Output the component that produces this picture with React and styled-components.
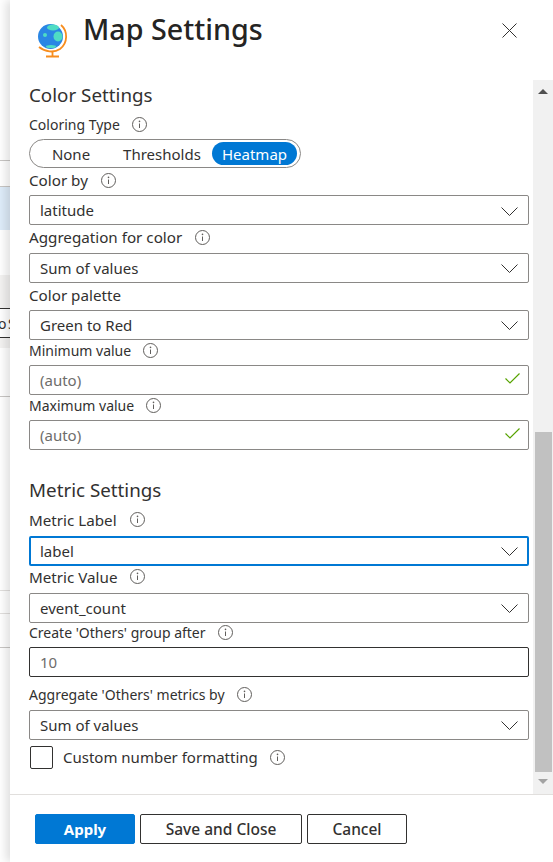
import React from "react";
import styled, { createGlobalStyle } from "styled-components";

const Global = createGlobalStyle`
  html, body { margin: 0; padding: 0; height: 100%; overflow: hidden; background: #fff; }
  body { font-family: "Noto Sans", "Open Sans", sans-serif; color: #323130; }
  * { box-sizing: border-box; }
`;

const Page = styled.div`
  display: flex;
  width: 553px;
  height: 862px;
`;

/* ---------- what is left of the page behind the panel ---------- */

const Behind = styled.div`
  width: 10px;
  height: 862px;
  display: flex;
  flex-direction: column;
  background: #fff;
  overflow: hidden;
`;

const BehindBand = styled.div`
  height: ${(p) => p.$h}px;
  background: ${(p) => p.$bg || "#fff"};
  border-bottom: ${(p) => (p.$line ? `1px solid ${p.$line}` : "none")};
  flex-shrink: 0;
  display: flex;
  align-items: center;
  font-size: 14px;
  white-space: nowrap;
`;

const BehindText = styled.span`
  margin-left: -2px;
  word-spacing: -2px;
`;

/* ---------- panel ---------- */

const Panel = styled.div`
  flex: 1;
  min-width: 0;
  height: 862px;
  display: flex;
  flex-direction: column;
  background: #fff;
  box-shadow: -4px 0 9px rgba(0, 0, 0, 0.13);
`;

const Header = styled.header`
  height: 80px;
  flex-shrink: 0;
  display: flex;
  align-items: flex-start;
  padding: 10px 0 0 25px;
`;

const Globe = styled.svg`
  width: 36px;
  height: 44px;
  margin-top: 11px;
  flex-shrink: 0;
`;

const Title = styled.h1`
  margin: 0 0 0 12px;
  font-size: 28.7px;
  line-height: 38px;
  font-weight: 500;
  color: #252423;
  flex: 1;
`;

const CloseButton = styled.button`
  width: 15px;
  height: 15px;
  margin: 13px 36px 0 0;
  padding: 0;
  border: none;
  background: none;
  display: flex;
`;

const Middle = styled.div`
  flex: 1;
  min-height: 0;
  display: flex;
`;

const Body = styled.main`
  flex: 1;
  min-width: 0;
  padding: 0 4px 0 19px;
`;

const SectionTitle = styled.h2`
  margin: ${(p) => p.$top}px 0 ${(p) => p.$bottom}px;
  font-size: 18.8px;
  line-height: 24px;
  font-weight: 400;
  color: #323130;
`;

const Label = styled.label`
  display: flex;
  align-items: center;
  gap: ${(p) => (p.$size ? 13 : 12)}px;
  height: 20px;
  font-size: ${(p) => p.$size || 14}px;
  color: #323130;
`;

const Field = styled.div`
  margin-top: ${(p) => p.$top || 0}px;
`;

const Control = styled.div`
  height: 30px;
  margin-top: ${(p) => p.$gap ?? 4}px;
  padding: 0 10px;
  display: flex;
  align-items: center;
  justify-content: space-between;
  font-size: 15px;
  border-radius: 2px;
  border: 1px solid ${(p) => (p.$dark ? "#323130" : "#8a8886")};
  color: ${(p) => (p.$muted ? "#6e6d6b" : "#323130")};
  ${(p) => p.$focus && "border: 2px solid #0078d4; padding: 0 9px;"}
`;

const ChevronIcon = styled.svg`
  width: 17px;
  height: 9px;
  margin-top: 2px;
`;

const CheckIcon = styled.svg`
  width: 15px;
  height: 11px;
  margin: -3px -2px 0 0;
`;

const Toggle = styled.div`
  width: 272px;
  height: 29px;
  margin-top: 5px;
  display: flex;
  align-items: center;
  border: 1px solid #8a8886;
  border-radius: 14.5px;
  font-size: 15px;
`;

const ToggleItem = styled.span`
  height: 23px;
  display: flex;
  align-items: center;
  justify-content: center;
  width: ${(p) => p.$w}px;
  border-radius: 11.5px;
  background: ${(p) => (p.$on ? "#0078d4" : "transparent")};
  color: ${(p) => (p.$on ? "#fff" : "#323130")};
`;

const CheckRow = styled.div`
  display: flex;
  align-items: center;
  margin-top: 6px;
  font-size: 15px;
  padding-left: 1px;
`;

const Box = styled.span`
  width: 23px;
  height: 23px;
  border: 1px solid #323130;
  border-radius: 2px;
  margin-right: 10px;
`;

const CheckLabel = styled.span`
  margin-right: 12px;
`;

/* ---------- scrollbar ---------- */

const Scrollbar = styled.div`
  width: 20px;
  flex-shrink: 0;
  background: #f1f1f1;
  display: flex;
  flex-direction: column;
  align-items: center;
`;

const ScrollArrow = styled.div`
  width: 0;
  height: 0;
  margin-top: ${(p) => p.$top}px;
  border-left: 5px solid transparent;
  border-right: 5px solid transparent;
  ${(p) => (p.$up ? "border-bottom: 5px solid #505050;" : "border-top: 5px solid #a3a3a3;")}
`;

const ScrollThumb = styled.div`
  width: 17px;
  height: 340px;
  margin-top: 338px;
  background: #c1c1c1;
`;

/* ---------- footer ---------- */

const Footer = styled.footer`
  height: 68px;
  flex-shrink: 0;
  border-top: 1px solid #e1dfdd;
  padding: 19px 0 0 25px;
  display: flex;
  gap: 5px;
`;

const Button = styled.button`
  width: ${(p) => p.$w}px;
  height: 30px;
  padding: 0;
  border-radius: 2px;
  font-family: inherit;
  font-size: ${(p) => (p.$primary ? 15 : 15.5)}px;
  font-weight: ${(p) => (p.$primary ? 700 : 500)};
  color: ${(p) => (p.$primary ? "#fff" : "#323130")};
  background: ${(p) => (p.$primary ? "#0078d4" : "#fff")};
  border: 1px solid ${(p) => (p.$primary ? "#0078d4" : "#323130")};
`;

const Info = () => (
  <svg width="15" height="15" viewBox="0 0 15 15" fill="none">
    <circle cx="7.5" cy="7.5" r="7" stroke="#605e5c" />
    <path d="M7.5 6.5v4.5" stroke="#605e5c" />
    <circle cx="7.5" cy="4.4" r="0.8" fill="#605e5c" />
  </svg>
);

const Chevron = () => (
  <ChevronIcon viewBox="0 0 17 9" fill="none">
    <path d="M0.5 0.5l8 8 8-8" stroke="#323130" />
  </ChevronIcon>
);

const Check = () => (
  <CheckIcon viewBox="0 0 15 11" fill="none">
    <path d="M0.5 5.5l4.5 4.5L14.5 0.5" stroke="#57a300" strokeWidth="1.2" />
  </CheckIcon>
);

function SelectField({ label, size, info = true, value, top, gap, focus }) {
  return (
    <Field $top={top}>
      <Label $size={size}>
        {label}
        {info && <Info />}
      </Label>
      <Control $focus={focus} $gap={gap}>
        {value}
        <Chevron />
      </Control>
    </Field>
  );
}

function AutoField({ top, gap, text }) {
  return (
    <Field $top={top}>
      <Label>
        {text}
        <Info />
      </Label>
      <Control $muted $gap={gap}>
        (auto)
        <Check />
      </Control>
    </Field>
  );
}

export default function App() {
  return (
    <Page>
      <Global />
      <Behind>
        <BehindBand $h={161} $line="#c8c6c4" />
        <BehindBand $h={26} $line="#c8c6c4" />
        <BehindBand $h={43} $bg="#deecf9" />
        <BehindBand $h={45} />
        <BehindBand $h={34} $bg="#f3f2f1" $line="#323130" />
        <BehindBand $h={29} $line="#323130">
          <BehindText>o S</BehindText>
        </BehindBand>
        <BehindBand $h={10} $bg="#f3f2f1" />
        <BehindBand $h={49} $line="#c8c6c4" />
        <BehindBand $h={194} $line="#e1dfdd" />
        <BehindBand $h={23} $line="#e1dfdd" />
        <BehindBand $h={34} $line="#c8c6c4" />
      </Behind>
      <Panel>
        <Header>
          <Globe viewBox="0 0 36 44">
            <circle cx="15.5" cy="15.5" r="12.5" fill="#2a86e4" />
            <ellipse cx="18" cy="6.5" rx="6" ry="3" fill="#4fdcc4" />
            <circle cx="10" cy="14" r="2" fill="#4fdcc4" />
            <ellipse cx="23" cy="15.5" rx="4.5" ry="5" fill="#4fdcc4" />
            <ellipse cx="16" cy="25.5" rx="5" ry="1.5" fill="#4fdcc4" />
            <path d="M26 4c7 6 7 18-1 24-6 4-15 3-21-2" fill="none" stroke="#f78d1e" strokeWidth="1.8" />
            <path d="M17.5 31v4M11 35.5h13" fill="none" stroke="#f78d1e" strokeWidth="1.8" />
          </Globe>
          <Title>Map Settings</Title>
          <CloseButton aria-label="Close">
            <svg width="15" height="15" viewBox="0 0 15 15" fill="none">
              <path d="M0.5 0.5l14 14M14.5 0.5l-14 14" stroke="#323130" />
            </svg>
          </CloseButton>
        </Header>
        <Middle>
          <Body>
            <SectionTitle $top={3} $bottom={7}>Color Settings</SectionTitle>
            <Label>
              Coloring Type
              <Info />
            </Label>
            <Toggle>
              <ToggleItem $w={82}>None</ToggleItem>
              <ToggleItem $w={100}>Thresholds</ToggleItem>
              <ToggleItem $w={85} $on>Heatmap</ToggleItem>
            </Toggle>
            <SelectField top={2} gap={5} size={15.2} value="latitude" label="Color by" />
            <SelectField top={2} gap={5.5} size={15.2} value="Sum of values" label="Aggregation for color" />
            <SelectField top={2} gap={5} size={15.2} info={false} value="Green to Red" label="Color palette" />
            <AutoField top={0.5} gap={4.5} text="Minimum value" />
            <AutoField top={1} text="Maximum value" />
            <SectionTitle $top={28} $bottom={8}>Metric Settings</SectionTitle>
            <SelectField size={15.2} gap={6} value="label" focus label="Metric Label" />
            <SelectField top={1} size={15.2} gap={6} value="event_count" label="Metric Value" />
            <Field>
              <Label>
                Create 'Others' group after
                <Info />
              </Label>
              <Control $muted $dark $gap={4}>10</Control>
            </Field>
            <SelectField top={8} gap={5} value="Sum of values" label="Aggregate 'Others' metrics by" />
            <CheckRow>
              <Box />
              <CheckLabel>Custom number formatting</CheckLabel>
              <Info />
            </CheckRow>
          </Body>
          <Scrollbar>
            <ScrollArrow $up $top={9} />
            <ScrollThumb />
            <ScrollArrow $top={7} />
          </Scrollbar>
        </Middle>
        <Footer>
          <Button $primary $w={100}>Apply</Button>
          <Button $w={162}>Save and Close</Button>
          <Button $w={100}>Cancel</Button>
        </Footer>
      </Panel>
    </Page>
  );
}
